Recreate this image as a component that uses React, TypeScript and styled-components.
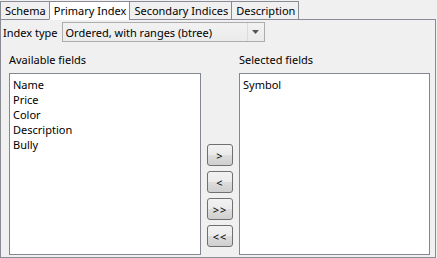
import React from "react";
import styled, { createGlobalStyle } from "styled-components";

const Global = createGlobalStyle`
  html, body { margin: 0; padding: 0; background: #f0f0f0; }
  body { font-family: "Noto Sans", "DejaVu Sans", sans-serif; font-size: 11px; color: #000; }
`;

const Root = styled.div`
  width: 437px;
  height: 258px;
  background: #f0f0f0;
  display: flex;
  flex-direction: column;
  box-sizing: border-box;
`;

const TabBar = styled.div`
  display: flex;
  height: 20px;
  padding-top: 1px;
  box-sizing: border-box;
  position: relative;
  z-index: 1;
`;

const Tab = styled.div<{ $active?: boolean }>`
  height: 19px;
  box-sizing: border-box;
  padding: 0 3px 0 4px;
  display: flex;
  align-items: center;
  background: ${(p) => (p.$active ? "#ffffff" : "#f0f0f0")};
  border: 1px solid #898c95;
  border-bottom: ${(p) => (p.$active ? "1px solid #ffffff" : "1px solid #898c95")};
  margin-left: -1px;
  white-space: nowrap;
  line-height: 16px;
  &:first-child { margin-left: 0; }
`;

const Panel = styled.div`
  flex: 1;
  border: 1px solid #898c95;
  margin-top: -1px;
  margin-right: 1px;
  display: flex;
  flex-direction: column;
  padding: 2px 6px 2px 1px;
  box-sizing: border-box;
`;

const TypeRow = styled.div`
  display: flex;
  align-items: center;
  gap: 4px;
  height: 20px;
  padding-left: 1px;
`;

const Label = styled.span`
  white-space: nowrap;
`;

const Combo = styled.div`
  width: 203px;
  height: 20px;
  box-sizing: border-box;
  border: 1px solid #acacac;
  background: linear-gradient(#f2f2f2, #ebebeb);
  display: flex;
  align-items: center;
`;

const ComboText = styled.span`
  flex: 1;
  padding-left: 3px;
  white-space: nowrap;
`;

const ComboArrow = styled.div`
  width: 16px;
  height: 18px;
  border-left: 1px solid #dcdcdc;
  display: flex;
  align-items: center;
  justify-content: center;
`;

const Columns = styled.div`
  flex: 1;
  display: grid;
  grid-template-columns: 192px 38px 191px;
  padding: 11px 0 0 7px;
`;

const Column = styled.div`
  display: flex;
  flex-direction: column;
`;

const ColLabel = styled.div`
  height: 20px;
  line-height: 14px;
`;

const ListBox = styled.div`
  flex: 1;
  background: #fff;
  border: 1px solid #828790;
  padding: 3px 3px;
  box-sizing: border-box;
`;

const Item = styled.div`
  line-height: 15px;
  height: 15px;
`;

const Middle = styled.div`
  display: flex;
  flex-direction: column;
  align-items: center;
  justify-content: flex-end;
  gap: 5px;
  padding-bottom: 8px;
`;

const Btn = styled.button`
  width: 26px;
  height: 22px;
  box-sizing: border-box;
  border: 1px solid #707070;
  border-radius: 3px;
  background: linear-gradient(#f2f2f2 0%, #ebebeb 50%, #dddddd 51%, #cfcfcf 100%);
  font-family: "Noto Sans", "DejaVu Sans", sans-serif;
  font-size: 11px;
  padding: 0;
  color: #000;
  letter-spacing: 1px;
`;

export default function App() {
  const avail = ["Name", "Price", "Color", "Description", "Bully"];
  return (
    <>
      <Global />
      <Root>
        <TabBar>
          <Tab>Schema</Tab>
          <Tab $active>Primary Index</Tab>
          <Tab>Secondary Indices</Tab>
          <Tab>Description</Tab>
        </TabBar>
        <Panel>
          <TypeRow>
            <Label>Index type</Label>
            <Combo>
              <ComboText>Ordered, with ranges (btree)</ComboText>
              <ComboArrow>
                <svg width="7" height="4" viewBox="0 0 7 4">
                  <path d="M0 0 H7 L3.5 4 Z" fill="#555" />
                </svg>
              </ComboArrow>
            </Combo>
          </TypeRow>
          <Columns>
            <Column>
              <ColLabel>Available fields</ColLabel>
              <ListBox>
                {avail.map((a) => (
                  <Item key={a}>{a}</Item>
                ))}
              </ListBox>
            </Column>
            <Middle>
              <Btn>&gt;</Btn>
              <Btn>&lt;</Btn>
              <Btn>&gt;&gt;</Btn>
              <Btn>&lt;&lt;</Btn>
            </Middle>
            <Column>
              <ColLabel>Selected fields</ColLabel>
              <ListBox>
                <Item>Symbol</Item>
              </ListBox>
            </Column>
          </Columns>
        </Panel>
      </Root>
    </>
  );
}
